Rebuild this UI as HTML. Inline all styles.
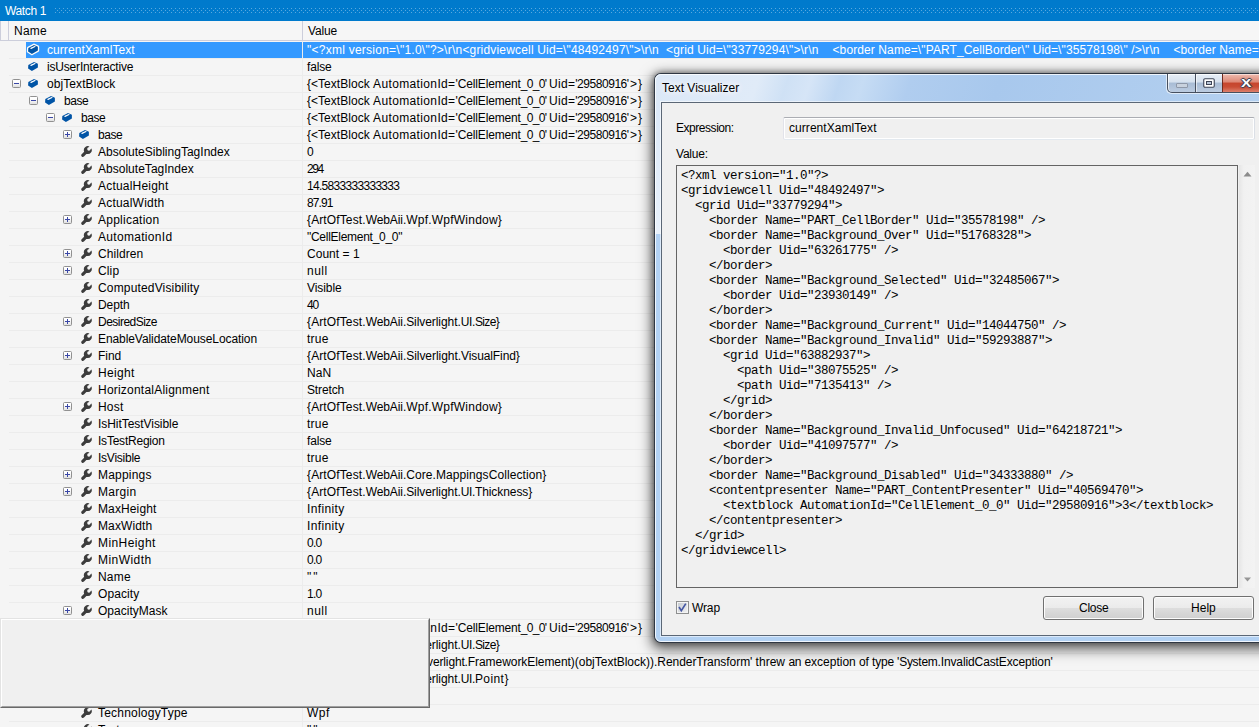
<!DOCTYPE html>
<html><head><meta charset="utf-8"><title>Watch 1</title>
<style>
html,body{margin:0;padding:0}
body{width:1259px;height:727px;overflow:hidden;position:relative;background:#f5f5f5;font-family:"Liberation Sans",sans-serif;font-size:12px;color:#000}
div,span,svg{position:absolute;white-space:pre}
.t{font-size:12px;line-height:16px;height:16px}
.k{color:#000}
.w{color:#fff}
.ic{display:block}
.ln{left:9px;right:0;height:1px;background:#ececec}
#tb{left:0;top:0;width:1259px;height:21px;background:#007acc}
#dots{left:55px;top:7px}
#hdr{left:0;top:21px;width:1259px;height:19px;background:#f6f6f6;border-bottom:1px solid #cccedb}
.mono{font-family:"Liberation Mono",monospace;font-size:12.5px;letter-spacing:-0.501px;line-height:15px;height:15px;color:#000}
</style></head><body>

<div id="tb"><svg id="dots" width="1204" height="6"><defs><pattern id="dp" width="4" height="4" patternUnits="userSpaceOnUse"><rect x="0" y="1" width="1" height="1" fill="#59a8de"/><rect x="2" y="3" width="1" height="1" fill="#59a8de"/></pattern></defs><rect width="1204" height="6" fill="url(#dp)"/></svg></div>
<div id="hdr"><div style="left:0;top:0;width:1px;height:19px;background:#cccedb"></div><div style="left:8px;top:0;width:1px;height:19px;background:#cccedb"></div><div style="left:302px;top:0;width:1px;height:19px;background:#cccedb"></div></div>
<div style="left:26px;top:42px;width:1233px;height:16px;background:#3399ff"></div>
<svg class="ic" style="left:26px;top:42px" width="15" height="14" viewBox="-2 -2 15 14"><path d="M0.3 3.9 L6 0.9 L9.9 2.7 L9.9 6.6 L3.9 9.9 L0.1 7.5 Z" fill="#0054a6" stroke-linejoin="round" stroke="#fffdf8" stroke-width="2.6" stroke-linejoin="round" paint-order="stroke"/><path d="M3 4.4 L6.9 2.5" stroke="#fff" stroke-width="1.2" stroke-linecap="round" fill="none"/></svg>
<div class="ln" style="top:58px"></div>
<svg class="ic" style="left:26px;top:59px" width="15" height="14" viewBox="-2 -2 15 14"><path d="M0.3 3.9 L6 0.9 L9.9 2.7 L9.9 6.6 L3.9 9.9 L0.1 7.5 Z" fill="#0054a6" stroke-linejoin="round"/><path d="M3 4.4 L6.9 2.5" stroke="#fff" stroke-width="1.2" stroke-linecap="round" fill="none"/></svg>
<div class="ln" style="top:75px"></div>
<svg class="ic" style="left:12px;top:79px" width="9" height="9" viewBox="0 0 9 9"><defs><linearGradient id="eg" x1="0" y1="0" x2="0" y2="1"><stop offset="0.3" stop-color="#fff"/><stop offset="1" stop-color="#dedede"/></linearGradient></defs><rect x="0.5" y="0.5" width="8" height="8" rx="1" fill="url(#eg)" stroke="#919191"/><rect x="2" y="4" width="5" height="1" fill="#3a47a6"/></svg>
<svg class="ic" style="left:26px;top:76px" width="15" height="14" viewBox="-2 -2 15 14"><path d="M0.3 3.9 L6 0.9 L9.9 2.7 L9.9 6.6 L3.9 9.9 L0.1 7.5 Z" fill="#0054a6" stroke-linejoin="round"/><path d="M3 4.4 L6.9 2.5" stroke="#fff" stroke-width="1.2" stroke-linecap="round" fill="none"/></svg>
<div class="ln" style="top:92px"></div>
<svg class="ic" style="left:29px;top:96px" width="9" height="9" viewBox="0 0 9 9"><defs><linearGradient id="eg" x1="0" y1="0" x2="0" y2="1"><stop offset="0.3" stop-color="#fff"/><stop offset="1" stop-color="#dedede"/></linearGradient></defs><rect x="0.5" y="0.5" width="8" height="8" rx="1" fill="url(#eg)" stroke="#919191"/><rect x="2" y="4" width="5" height="1" fill="#3a47a6"/></svg>
<svg class="ic" style="left:43px;top:93px" width="15" height="14" viewBox="-2 -2 15 14"><path d="M0.3 3.9 L6 0.9 L9.9 2.7 L9.9 6.6 L3.9 9.9 L0.1 7.5 Z" fill="#0054a6" stroke-linejoin="round"/><path d="M3 4.4 L6.9 2.5" stroke="#fff" stroke-width="1.2" stroke-linecap="round" fill="none"/></svg>
<div class="ln" style="top:109px"></div>
<svg class="ic" style="left:46px;top:113px" width="9" height="9" viewBox="0 0 9 9"><defs><linearGradient id="eg" x1="0" y1="0" x2="0" y2="1"><stop offset="0.3" stop-color="#fff"/><stop offset="1" stop-color="#dedede"/></linearGradient></defs><rect x="0.5" y="0.5" width="8" height="8" rx="1" fill="url(#eg)" stroke="#919191"/><rect x="2" y="4" width="5" height="1" fill="#3a47a6"/></svg>
<svg class="ic" style="left:60px;top:110px" width="15" height="14" viewBox="-2 -2 15 14"><path d="M0.3 3.9 L6 0.9 L9.9 2.7 L9.9 6.6 L3.9 9.9 L0.1 7.5 Z" fill="#0054a6" stroke-linejoin="round"/><path d="M3 4.4 L6.9 2.5" stroke="#fff" stroke-width="1.2" stroke-linecap="round" fill="none"/></svg>
<div class="ln" style="top:126px"></div>
<svg class="ic" style="left:63px;top:130px" width="9" height="9" viewBox="0 0 9 9"><defs><linearGradient id="eg" x1="0" y1="0" x2="0" y2="1"><stop offset="0.3" stop-color="#fff"/><stop offset="1" stop-color="#dedede"/></linearGradient></defs><rect x="0.5" y="0.5" width="8" height="8" rx="1" fill="url(#eg)" stroke="#919191"/><rect x="2" y="4" width="5" height="1" fill="#3a47a6"/><rect x="4" y="2" width="1" height="5" fill="#3a47a6"/></svg>
<svg class="ic" style="left:77px;top:127px" width="15" height="14" viewBox="-2 -2 15 14"><path d="M0.3 3.9 L6 0.9 L9.9 2.7 L9.9 6.6 L3.9 9.9 L0.1 7.5 Z" fill="#0054a6" stroke-linejoin="round"/><path d="M3 4.4 L6.9 2.5" stroke="#fff" stroke-width="1.2" stroke-linecap="round" fill="none"/></svg>
<div class="ln" style="top:143px"></div>
<svg class="ic" style="left:81px;top:146px" width="12" height="12" viewBox="0 0 12 12"><path d="M8.49 0.47 L7.64 1.32 A1.7 1.7 0 1 0 9.58 3.26 L10.43 2.41 A4 4 0 0 1 6.11 8.04 L5.4 8.06 L2.92 10.54 A1.6 1.6 0 0 1 0.66 8.28 L3.14 5.8 L2.86 4.79 A4 4 0 0 1 8.49 0.47 Z" fill="#3c3c3c"/></svg>
<div class="ln" style="top:160px"></div>
<svg class="ic" style="left:81px;top:163px" width="12" height="12" viewBox="0 0 12 12"><path d="M8.49 0.47 L7.64 1.32 A1.7 1.7 0 1 0 9.58 3.26 L10.43 2.41 A4 4 0 0 1 6.11 8.04 L5.4 8.06 L2.92 10.54 A1.6 1.6 0 0 1 0.66 8.28 L3.14 5.8 L2.86 4.79 A4 4 0 0 1 8.49 0.47 Z" fill="#3c3c3c"/></svg>
<div class="ln" style="top:177px"></div>
<svg class="ic" style="left:81px;top:180px" width="12" height="12" viewBox="0 0 12 12"><path d="M8.49 0.47 L7.64 1.32 A1.7 1.7 0 1 0 9.58 3.26 L10.43 2.41 A4 4 0 0 1 6.11 8.04 L5.4 8.06 L2.92 10.54 A1.6 1.6 0 0 1 0.66 8.28 L3.14 5.8 L2.86 4.79 A4 4 0 0 1 8.49 0.47 Z" fill="#3c3c3c"/></svg>
<div class="ln" style="top:194px"></div>
<svg class="ic" style="left:81px;top:197px" width="12" height="12" viewBox="0 0 12 12"><path d="M8.49 0.47 L7.64 1.32 A1.7 1.7 0 1 0 9.58 3.26 L10.43 2.41 A4 4 0 0 1 6.11 8.04 L5.4 8.06 L2.92 10.54 A1.6 1.6 0 0 1 0.66 8.28 L3.14 5.8 L2.86 4.79 A4 4 0 0 1 8.49 0.47 Z" fill="#3c3c3c"/></svg>
<div class="ln" style="top:211px"></div>
<svg class="ic" style="left:63px;top:215px" width="9" height="9" viewBox="0 0 9 9"><defs><linearGradient id="eg" x1="0" y1="0" x2="0" y2="1"><stop offset="0.3" stop-color="#fff"/><stop offset="1" stop-color="#dedede"/></linearGradient></defs><rect x="0.5" y="0.5" width="8" height="8" rx="1" fill="url(#eg)" stroke="#919191"/><rect x="2" y="4" width="5" height="1" fill="#3a47a6"/><rect x="4" y="2" width="1" height="5" fill="#3a47a6"/></svg>
<svg class="ic" style="left:81px;top:214px" width="12" height="12" viewBox="0 0 12 12"><path d="M8.49 0.47 L7.64 1.32 A1.7 1.7 0 1 0 9.58 3.26 L10.43 2.41 A4 4 0 0 1 6.11 8.04 L5.4 8.06 L2.92 10.54 A1.6 1.6 0 0 1 0.66 8.28 L3.14 5.8 L2.86 4.79 A4 4 0 0 1 8.49 0.47 Z" fill="#3c3c3c"/></svg>
<div class="ln" style="top:228px"></div>
<svg class="ic" style="left:81px;top:231px" width="12" height="12" viewBox="0 0 12 12"><path d="M8.49 0.47 L7.64 1.32 A1.7 1.7 0 1 0 9.58 3.26 L10.43 2.41 A4 4 0 0 1 6.11 8.04 L5.4 8.06 L2.92 10.54 A1.6 1.6 0 0 1 0.66 8.28 L3.14 5.8 L2.86 4.79 A4 4 0 0 1 8.49 0.47 Z" fill="#3c3c3c"/></svg>
<div class="ln" style="top:245px"></div>
<svg class="ic" style="left:63px;top:249px" width="9" height="9" viewBox="0 0 9 9"><defs><linearGradient id="eg" x1="0" y1="0" x2="0" y2="1"><stop offset="0.3" stop-color="#fff"/><stop offset="1" stop-color="#dedede"/></linearGradient></defs><rect x="0.5" y="0.5" width="8" height="8" rx="1" fill="url(#eg)" stroke="#919191"/><rect x="2" y="4" width="5" height="1" fill="#3a47a6"/><rect x="4" y="2" width="1" height="5" fill="#3a47a6"/></svg>
<svg class="ic" style="left:81px;top:248px" width="12" height="12" viewBox="0 0 12 12"><path d="M8.49 0.47 L7.64 1.32 A1.7 1.7 0 1 0 9.58 3.26 L10.43 2.41 A4 4 0 0 1 6.11 8.04 L5.4 8.06 L2.92 10.54 A1.6 1.6 0 0 1 0.66 8.28 L3.14 5.8 L2.86 4.79 A4 4 0 0 1 8.49 0.47 Z" fill="#3c3c3c"/></svg>
<div class="ln" style="top:262px"></div>
<svg class="ic" style="left:63px;top:266px" width="9" height="9" viewBox="0 0 9 9"><defs><linearGradient id="eg" x1="0" y1="0" x2="0" y2="1"><stop offset="0.3" stop-color="#fff"/><stop offset="1" stop-color="#dedede"/></linearGradient></defs><rect x="0.5" y="0.5" width="8" height="8" rx="1" fill="url(#eg)" stroke="#919191"/><rect x="2" y="4" width="5" height="1" fill="#3a47a6"/><rect x="4" y="2" width="1" height="5" fill="#3a47a6"/></svg>
<svg class="ic" style="left:81px;top:265px" width="12" height="12" viewBox="0 0 12 12"><path d="M8.49 0.47 L7.64 1.32 A1.7 1.7 0 1 0 9.58 3.26 L10.43 2.41 A4 4 0 0 1 6.11 8.04 L5.4 8.06 L2.92 10.54 A1.6 1.6 0 0 1 0.66 8.28 L3.14 5.8 L2.86 4.79 A4 4 0 0 1 8.49 0.47 Z" fill="#3c3c3c"/></svg>
<div class="ln" style="top:279px"></div>
<svg class="ic" style="left:81px;top:282px" width="12" height="12" viewBox="0 0 12 12"><path d="M8.49 0.47 L7.64 1.32 A1.7 1.7 0 1 0 9.58 3.26 L10.43 2.41 A4 4 0 0 1 6.11 8.04 L5.4 8.06 L2.92 10.54 A1.6 1.6 0 0 1 0.66 8.28 L3.14 5.8 L2.86 4.79 A4 4 0 0 1 8.49 0.47 Z" fill="#3c3c3c"/></svg>
<div class="ln" style="top:296px"></div>
<svg class="ic" style="left:81px;top:299px" width="12" height="12" viewBox="0 0 12 12"><path d="M8.49 0.47 L7.64 1.32 A1.7 1.7 0 1 0 9.58 3.26 L10.43 2.41 A4 4 0 0 1 6.11 8.04 L5.4 8.06 L2.92 10.54 A1.6 1.6 0 0 1 0.66 8.28 L3.14 5.8 L2.86 4.79 A4 4 0 0 1 8.49 0.47 Z" fill="#3c3c3c"/></svg>
<div class="ln" style="top:313px"></div>
<svg class="ic" style="left:63px;top:317px" width="9" height="9" viewBox="0 0 9 9"><defs><linearGradient id="eg" x1="0" y1="0" x2="0" y2="1"><stop offset="0.3" stop-color="#fff"/><stop offset="1" stop-color="#dedede"/></linearGradient></defs><rect x="0.5" y="0.5" width="8" height="8" rx="1" fill="url(#eg)" stroke="#919191"/><rect x="2" y="4" width="5" height="1" fill="#3a47a6"/><rect x="4" y="2" width="1" height="5" fill="#3a47a6"/></svg>
<svg class="ic" style="left:81px;top:316px" width="12" height="12" viewBox="0 0 12 12"><path d="M8.49 0.47 L7.64 1.32 A1.7 1.7 0 1 0 9.58 3.26 L10.43 2.41 A4 4 0 0 1 6.11 8.04 L5.4 8.06 L2.92 10.54 A1.6 1.6 0 0 1 0.66 8.28 L3.14 5.8 L2.86 4.79 A4 4 0 0 1 8.49 0.47 Z" fill="#3c3c3c"/></svg>
<div class="ln" style="top:330px"></div>
<svg class="ic" style="left:81px;top:333px" width="12" height="12" viewBox="0 0 12 12"><path d="M8.49 0.47 L7.64 1.32 A1.7 1.7 0 1 0 9.58 3.26 L10.43 2.41 A4 4 0 0 1 6.11 8.04 L5.4 8.06 L2.92 10.54 A1.6 1.6 0 0 1 0.66 8.28 L3.14 5.8 L2.86 4.79 A4 4 0 0 1 8.49 0.47 Z" fill="#3c3c3c"/></svg>
<div class="ln" style="top:347px"></div>
<svg class="ic" style="left:63px;top:351px" width="9" height="9" viewBox="0 0 9 9"><defs><linearGradient id="eg" x1="0" y1="0" x2="0" y2="1"><stop offset="0.3" stop-color="#fff"/><stop offset="1" stop-color="#dedede"/></linearGradient></defs><rect x="0.5" y="0.5" width="8" height="8" rx="1" fill="url(#eg)" stroke="#919191"/><rect x="2" y="4" width="5" height="1" fill="#3a47a6"/><rect x="4" y="2" width="1" height="5" fill="#3a47a6"/></svg>
<svg class="ic" style="left:81px;top:350px" width="12" height="12" viewBox="0 0 12 12"><path d="M8.49 0.47 L7.64 1.32 A1.7 1.7 0 1 0 9.58 3.26 L10.43 2.41 A4 4 0 0 1 6.11 8.04 L5.4 8.06 L2.92 10.54 A1.6 1.6 0 0 1 0.66 8.28 L3.14 5.8 L2.86 4.79 A4 4 0 0 1 8.49 0.47 Z" fill="#3c3c3c"/></svg>
<div class="ln" style="top:364px"></div>
<svg class="ic" style="left:81px;top:367px" width="12" height="12" viewBox="0 0 12 12"><path d="M8.49 0.47 L7.64 1.32 A1.7 1.7 0 1 0 9.58 3.26 L10.43 2.41 A4 4 0 0 1 6.11 8.04 L5.4 8.06 L2.92 10.54 A1.6 1.6 0 0 1 0.66 8.28 L3.14 5.8 L2.86 4.79 A4 4 0 0 1 8.49 0.47 Z" fill="#3c3c3c"/></svg>
<div class="ln" style="top:381px"></div>
<svg class="ic" style="left:81px;top:384px" width="12" height="12" viewBox="0 0 12 12"><path d="M8.49 0.47 L7.64 1.32 A1.7 1.7 0 1 0 9.58 3.26 L10.43 2.41 A4 4 0 0 1 6.11 8.04 L5.4 8.06 L2.92 10.54 A1.6 1.6 0 0 1 0.66 8.28 L3.14 5.8 L2.86 4.79 A4 4 0 0 1 8.49 0.47 Z" fill="#3c3c3c"/></svg>
<div class="ln" style="top:398px"></div>
<svg class="ic" style="left:63px;top:402px" width="9" height="9" viewBox="0 0 9 9"><defs><linearGradient id="eg" x1="0" y1="0" x2="0" y2="1"><stop offset="0.3" stop-color="#fff"/><stop offset="1" stop-color="#dedede"/></linearGradient></defs><rect x="0.5" y="0.5" width="8" height="8" rx="1" fill="url(#eg)" stroke="#919191"/><rect x="2" y="4" width="5" height="1" fill="#3a47a6"/><rect x="4" y="2" width="1" height="5" fill="#3a47a6"/></svg>
<svg class="ic" style="left:81px;top:401px" width="12" height="12" viewBox="0 0 12 12"><path d="M8.49 0.47 L7.64 1.32 A1.7 1.7 0 1 0 9.58 3.26 L10.43 2.41 A4 4 0 0 1 6.11 8.04 L5.4 8.06 L2.92 10.54 A1.6 1.6 0 0 1 0.66 8.28 L3.14 5.8 L2.86 4.79 A4 4 0 0 1 8.49 0.47 Z" fill="#3c3c3c"/></svg>
<div class="ln" style="top:415px"></div>
<svg class="ic" style="left:81px;top:418px" width="12" height="12" viewBox="0 0 12 12"><path d="M8.49 0.47 L7.64 1.32 A1.7 1.7 0 1 0 9.58 3.26 L10.43 2.41 A4 4 0 0 1 6.11 8.04 L5.4 8.06 L2.92 10.54 A1.6 1.6 0 0 1 0.66 8.28 L3.14 5.8 L2.86 4.79 A4 4 0 0 1 8.49 0.47 Z" fill="#3c3c3c"/></svg>
<div class="ln" style="top:432px"></div>
<svg class="ic" style="left:81px;top:435px" width="12" height="12" viewBox="0 0 12 12"><path d="M8.49 0.47 L7.64 1.32 A1.7 1.7 0 1 0 9.58 3.26 L10.43 2.41 A4 4 0 0 1 6.11 8.04 L5.4 8.06 L2.92 10.54 A1.6 1.6 0 0 1 0.66 8.28 L3.14 5.8 L2.86 4.79 A4 4 0 0 1 8.49 0.47 Z" fill="#3c3c3c"/></svg>
<div class="ln" style="top:449px"></div>
<svg class="ic" style="left:81px;top:452px" width="12" height="12" viewBox="0 0 12 12"><path d="M8.49 0.47 L7.64 1.32 A1.7 1.7 0 1 0 9.58 3.26 L10.43 2.41 A4 4 0 0 1 6.11 8.04 L5.4 8.06 L2.92 10.54 A1.6 1.6 0 0 1 0.66 8.28 L3.14 5.8 L2.86 4.79 A4 4 0 0 1 8.49 0.47 Z" fill="#3c3c3c"/></svg>
<div class="ln" style="top:466px"></div>
<svg class="ic" style="left:63px;top:470px" width="9" height="9" viewBox="0 0 9 9"><defs><linearGradient id="eg" x1="0" y1="0" x2="0" y2="1"><stop offset="0.3" stop-color="#fff"/><stop offset="1" stop-color="#dedede"/></linearGradient></defs><rect x="0.5" y="0.5" width="8" height="8" rx="1" fill="url(#eg)" stroke="#919191"/><rect x="2" y="4" width="5" height="1" fill="#3a47a6"/><rect x="4" y="2" width="1" height="5" fill="#3a47a6"/></svg>
<svg class="ic" style="left:81px;top:469px" width="12" height="12" viewBox="0 0 12 12"><path d="M8.49 0.47 L7.64 1.32 A1.7 1.7 0 1 0 9.58 3.26 L10.43 2.41 A4 4 0 0 1 6.11 8.04 L5.4 8.06 L2.92 10.54 A1.6 1.6 0 0 1 0.66 8.28 L3.14 5.8 L2.86 4.79 A4 4 0 0 1 8.49 0.47 Z" fill="#3c3c3c"/></svg>
<div class="ln" style="top:483px"></div>
<svg class="ic" style="left:63px;top:487px" width="9" height="9" viewBox="0 0 9 9"><defs><linearGradient id="eg" x1="0" y1="0" x2="0" y2="1"><stop offset="0.3" stop-color="#fff"/><stop offset="1" stop-color="#dedede"/></linearGradient></defs><rect x="0.5" y="0.5" width="8" height="8" rx="1" fill="url(#eg)" stroke="#919191"/><rect x="2" y="4" width="5" height="1" fill="#3a47a6"/><rect x="4" y="2" width="1" height="5" fill="#3a47a6"/></svg>
<svg class="ic" style="left:81px;top:486px" width="12" height="12" viewBox="0 0 12 12"><path d="M8.49 0.47 L7.64 1.32 A1.7 1.7 0 1 0 9.58 3.26 L10.43 2.41 A4 4 0 0 1 6.11 8.04 L5.4 8.06 L2.92 10.54 A1.6 1.6 0 0 1 0.66 8.28 L3.14 5.8 L2.86 4.79 A4 4 0 0 1 8.49 0.47 Z" fill="#3c3c3c"/></svg>
<div class="ln" style="top:500px"></div>
<svg class="ic" style="left:81px;top:503px" width="12" height="12" viewBox="0 0 12 12"><path d="M8.49 0.47 L7.64 1.32 A1.7 1.7 0 1 0 9.58 3.26 L10.43 2.41 A4 4 0 0 1 6.11 8.04 L5.4 8.06 L2.92 10.54 A1.6 1.6 0 0 1 0.66 8.28 L3.14 5.8 L2.86 4.79 A4 4 0 0 1 8.49 0.47 Z" fill="#3c3c3c"/></svg>
<div class="ln" style="top:517px"></div>
<svg class="ic" style="left:81px;top:520px" width="12" height="12" viewBox="0 0 12 12"><path d="M8.49 0.47 L7.64 1.32 A1.7 1.7 0 1 0 9.58 3.26 L10.43 2.41 A4 4 0 0 1 6.11 8.04 L5.4 8.06 L2.92 10.54 A1.6 1.6 0 0 1 0.66 8.28 L3.14 5.8 L2.86 4.79 A4 4 0 0 1 8.49 0.47 Z" fill="#3c3c3c"/></svg>
<div class="ln" style="top:534px"></div>
<svg class="ic" style="left:81px;top:537px" width="12" height="12" viewBox="0 0 12 12"><path d="M8.49 0.47 L7.64 1.32 A1.7 1.7 0 1 0 9.58 3.26 L10.43 2.41 A4 4 0 0 1 6.11 8.04 L5.4 8.06 L2.92 10.54 A1.6 1.6 0 0 1 0.66 8.28 L3.14 5.8 L2.86 4.79 A4 4 0 0 1 8.49 0.47 Z" fill="#3c3c3c"/></svg>
<div class="ln" style="top:551px"></div>
<svg class="ic" style="left:81px;top:554px" width="12" height="12" viewBox="0 0 12 12"><path d="M8.49 0.47 L7.64 1.32 A1.7 1.7 0 1 0 9.58 3.26 L10.43 2.41 A4 4 0 0 1 6.11 8.04 L5.4 8.06 L2.92 10.54 A1.6 1.6 0 0 1 0.66 8.28 L3.14 5.8 L2.86 4.79 A4 4 0 0 1 8.49 0.47 Z" fill="#3c3c3c"/></svg>
<div class="ln" style="top:568px"></div>
<svg class="ic" style="left:81px;top:571px" width="12" height="12" viewBox="0 0 12 12"><path d="M8.49 0.47 L7.64 1.32 A1.7 1.7 0 1 0 9.58 3.26 L10.43 2.41 A4 4 0 0 1 6.11 8.04 L5.4 8.06 L2.92 10.54 A1.6 1.6 0 0 1 0.66 8.28 L3.14 5.8 L2.86 4.79 A4 4 0 0 1 8.49 0.47 Z" fill="#3c3c3c"/></svg>
<div class="ln" style="top:585px"></div>
<svg class="ic" style="left:81px;top:588px" width="12" height="12" viewBox="0 0 12 12"><path d="M8.49 0.47 L7.64 1.32 A1.7 1.7 0 1 0 9.58 3.26 L10.43 2.41 A4 4 0 0 1 6.11 8.04 L5.4 8.06 L2.92 10.54 A1.6 1.6 0 0 1 0.66 8.28 L3.14 5.8 L2.86 4.79 A4 4 0 0 1 8.49 0.47 Z" fill="#3c3c3c"/></svg>
<div class="ln" style="top:602px"></div>
<svg class="ic" style="left:63px;top:606px" width="9" height="9" viewBox="0 0 9 9"><defs><linearGradient id="eg" x1="0" y1="0" x2="0" y2="1"><stop offset="0.3" stop-color="#fff"/><stop offset="1" stop-color="#dedede"/></linearGradient></defs><rect x="0.5" y="0.5" width="8" height="8" rx="1" fill="url(#eg)" stroke="#919191"/><rect x="2" y="4" width="5" height="1" fill="#3a47a6"/><rect x="4" y="2" width="1" height="5" fill="#3a47a6"/></svg>
<svg class="ic" style="left:81px;top:605px" width="12" height="12" viewBox="0 0 12 12"><path d="M8.49 0.47 L7.64 1.32 A1.7 1.7 0 1 0 9.58 3.26 L10.43 2.41 A4 4 0 0 1 6.11 8.04 L5.4 8.06 L2.92 10.54 A1.6 1.6 0 0 1 0.66 8.28 L3.14 5.8 L2.86 4.79 A4 4 0 0 1 8.49 0.47 Z" fill="#3c3c3c"/></svg>
<div class="ln" style="top:619px"></div>
<svg class="ic" style="left:63px;top:623px" width="9" height="9" viewBox="0 0 9 9"><defs><linearGradient id="eg" x1="0" y1="0" x2="0" y2="1"><stop offset="0.3" stop-color="#fff"/><stop offset="1" stop-color="#dedede"/></linearGradient></defs><rect x="0.5" y="0.5" width="8" height="8" rx="1" fill="url(#eg)" stroke="#919191"/><rect x="2" y="4" width="5" height="1" fill="#3a47a6"/><rect x="4" y="2" width="1" height="5" fill="#3a47a6"/></svg>
<svg class="ic" style="left:81px;top:622px" width="12" height="12" viewBox="0 0 12 12"><path d="M8.49 0.47 L7.64 1.32 A1.7 1.7 0 1 0 9.58 3.26 L10.43 2.41 A4 4 0 0 1 6.11 8.04 L5.4 8.06 L2.92 10.54 A1.6 1.6 0 0 1 0.66 8.28 L3.14 5.8 L2.86 4.79 A4 4 0 0 1 8.49 0.47 Z" fill="#3c3c3c"/></svg>
<div class="ln" style="top:636px"></div>
<svg class="ic" style="left:63px;top:640px" width="9" height="9" viewBox="0 0 9 9"><defs><linearGradient id="eg" x1="0" y1="0" x2="0" y2="1"><stop offset="0.3" stop-color="#fff"/><stop offset="1" stop-color="#dedede"/></linearGradient></defs><rect x="0.5" y="0.5" width="8" height="8" rx="1" fill="url(#eg)" stroke="#919191"/><rect x="2" y="4" width="5" height="1" fill="#3a47a6"/><rect x="4" y="2" width="1" height="5" fill="#3a47a6"/></svg>
<svg class="ic" style="left:81px;top:639px" width="12" height="12" viewBox="0 0 12 12"><path d="M8.49 0.47 L7.64 1.32 A1.7 1.7 0 1 0 9.58 3.26 L10.43 2.41 A4 4 0 0 1 6.11 8.04 L5.4 8.06 L2.92 10.54 A1.6 1.6 0 0 1 0.66 8.28 L3.14 5.8 L2.86 4.79 A4 4 0 0 1 8.49 0.47 Z" fill="#3c3c3c"/></svg>
<div class="ln" style="top:653px"></div>
<svg class="ic" style="left:63px;top:657px" width="9" height="9" viewBox="0 0 9 9"><defs><linearGradient id="eg" x1="0" y1="0" x2="0" y2="1"><stop offset="0.3" stop-color="#fff"/><stop offset="1" stop-color="#dedede"/></linearGradient></defs><rect x="0.5" y="0.5" width="8" height="8" rx="1" fill="url(#eg)" stroke="#919191"/><rect x="2" y="4" width="5" height="1" fill="#3a47a6"/><rect x="4" y="2" width="1" height="5" fill="#3a47a6"/></svg>
<svg class="ic" style="left:81px;top:656px" width="12" height="12" viewBox="0 0 12 12"><path d="M8.49 0.47 L7.64 1.32 A1.7 1.7 0 1 0 9.58 3.26 L10.43 2.41 A4 4 0 0 1 6.11 8.04 L5.4 8.06 L2.92 10.54 A1.6 1.6 0 0 1 0.66 8.28 L3.14 5.8 L2.86 4.79 A4 4 0 0 1 8.49 0.47 Z" fill="#3c3c3c"/></svg>
<div class="ln" style="top:670px"></div>
<svg class="ic" style="left:63px;top:674px" width="9" height="9" viewBox="0 0 9 9"><defs><linearGradient id="eg" x1="0" y1="0" x2="0" y2="1"><stop offset="0.3" stop-color="#fff"/><stop offset="1" stop-color="#dedede"/></linearGradient></defs><rect x="0.5" y="0.5" width="8" height="8" rx="1" fill="url(#eg)" stroke="#919191"/><rect x="2" y="4" width="5" height="1" fill="#3a47a6"/><rect x="4" y="2" width="1" height="5" fill="#3a47a6"/></svg>
<svg class="ic" style="left:81px;top:673px" width="12" height="12" viewBox="0 0 12 12"><path d="M8.49 0.47 L7.64 1.32 A1.7 1.7 0 1 0 9.58 3.26 L10.43 2.41 A4 4 0 0 1 6.11 8.04 L5.4 8.06 L2.92 10.54 A1.6 1.6 0 0 1 0.66 8.28 L3.14 5.8 L2.86 4.79 A4 4 0 0 1 8.49 0.47 Z" fill="#3c3c3c"/></svg>
<div class="ln" style="top:687px"></div>
<svg class="ic" style="left:81px;top:690px" width="12" height="12" viewBox="0 0 12 12"><path d="M8.49 0.47 L7.64 1.32 A1.7 1.7 0 1 0 9.58 3.26 L10.43 2.41 A4 4 0 0 1 6.11 8.04 L5.4 8.06 L2.92 10.54 A1.6 1.6 0 0 1 0.66 8.28 L3.14 5.8 L2.86 4.79 A4 4 0 0 1 8.49 0.47 Z" fill="#3c3c3c"/></svg>
<div class="ln" style="top:704px"></div>
<svg class="ic" style="left:81px;top:707px" width="12" height="12" viewBox="0 0 12 12"><path d="M8.49 0.47 L7.64 1.32 A1.7 1.7 0 1 0 9.58 3.26 L10.43 2.41 A4 4 0 0 1 6.11 8.04 L5.4 8.06 L2.92 10.54 A1.6 1.6 0 0 1 0.66 8.28 L3.14 5.8 L2.86 4.79 A4 4 0 0 1 8.49 0.47 Z" fill="#3c3c3c"/></svg>
<div class="ln" style="top:721px"></div>
<svg class="ic" style="left:81px;top:724px" width="12" height="12" viewBox="0 0 12 12"><path d="M8.49 0.47 L7.64 1.32 A1.7 1.7 0 1 0 9.58 3.26 L10.43 2.41 A4 4 0 0 1 6.11 8.04 L5.4 8.06 L2.92 10.54 A1.6 1.6 0 0 1 0.66 8.28 L3.14 5.8 L2.86 4.79 A4 4 0 0 1 8.49 0.47 Z" fill="#3c3c3c"/></svg>
<div class="ln" style="top:738px"></div>
<div style="left:302px;top:41px;width:1px;height:686px;background:#ececec"></div>
<span class="t w" style="left:5px;top:3px;letter-spacing:-0.363px;">Watch 1</span>
<span class="t" style="left:14px;top:23px;letter-spacing:0.261px;">Name</span>
<span class="t" style="left:308px;top:23px;letter-spacing:-0.178px;">Value</span>
<span class="t w" style="left:47px;top:42px;letter-spacing:0.064px;">currentXamlText</span>
<span class="t w" style="left:307px;top:42px;letter-spacing:0.245px">"&lt;?xml version=\"1.0\"?&gt;\r\n</span>
<span class="t w" style="left:462.4px;top:42px;letter-spacing:0.179px">&lt;gridviewcell Uid=\"48492497\"&gt;\r\n  </span>
<span class="t w" style="left:666.0px;top:42px;letter-spacing:0.157px">&lt;grid Uid=\"33779294\"&gt;\r\n    </span>
<span class="t w" style="left:832.5px;top:42px;letter-spacing:0.102px">&lt;border Name=\"PART_CellBorder\" Uid=\"35578198\" /&gt;\r\n    </span>
<span class="t w" style="left:1173.4px;top:42px;letter-spacing:0.102px">&lt;border Name=\"Background_Over\" Uid=\"51768328\"&gt;</span>
<span class="t" style="left:47px;top:59px;letter-spacing:-0.186px;">isUserInteractive</span>
<span class="t" style="left:307px;top:59px;letter-spacing:-0.165px;">false</span>
<span class="t" style="left:47px;top:76px;letter-spacing:0.084px;">objTextBlock</span>
<span class="t" style="left:307px;top:76px;letter-spacing:0.033px">{&lt;TextBlock </span>
<span class="t" style="left:373.1px;top:76px;letter-spacing:0.36px">AutomationId=</span>
<span class="t" style="left:455.5px;top:76px;letter-spacing:-0.14px">'CellElement</span>
<span class="t" style="left:520.8px;top:76px;letter-spacing:-0.671px">_0_0' </span>
<span class="t" style="left:549.1px;top:76px;letter-spacing:0.296px">Uid=</span>
<span class="t" style="left:575.3px;top:76px;letter-spacing:-0.465px">'29580916</span>
<span class="t" style="left:626.8px;top:76px;letter-spacing:0.894px">'&gt;}</span>
<span class="t" style="left:64px;top:93px;letter-spacing:-0.477px;">base</span>
<span class="t" style="left:307px;top:93px;letter-spacing:0.033px">{&lt;TextBlock </span>
<span class="t" style="left:373.1px;top:93px;letter-spacing:0.36px">AutomationId=</span>
<span class="t" style="left:455.5px;top:93px;letter-spacing:-0.14px">'CellElement</span>
<span class="t" style="left:520.8px;top:93px;letter-spacing:-0.671px">_0_0' </span>
<span class="t" style="left:549.1px;top:93px;letter-spacing:0.296px">Uid=</span>
<span class="t" style="left:575.3px;top:93px;letter-spacing:-0.465px">'29580916</span>
<span class="t" style="left:626.8px;top:93px;letter-spacing:0.894px">'&gt;}</span>
<span class="t" style="left:81px;top:110px;letter-spacing:-0.477px;">base</span>
<span class="t" style="left:307px;top:110px;letter-spacing:0.033px">{&lt;TextBlock </span>
<span class="t" style="left:373.1px;top:110px;letter-spacing:0.36px">AutomationId=</span>
<span class="t" style="left:455.5px;top:110px;letter-spacing:-0.14px">'CellElement</span>
<span class="t" style="left:520.8px;top:110px;letter-spacing:-0.671px">_0_0' </span>
<span class="t" style="left:549.1px;top:110px;letter-spacing:0.296px">Uid=</span>
<span class="t" style="left:575.3px;top:110px;letter-spacing:-0.465px">'29580916</span>
<span class="t" style="left:626.8px;top:110px;letter-spacing:0.894px">'&gt;}</span>
<span class="t" style="left:98px;top:127px;letter-spacing:-0.477px;">base</span>
<span class="t" style="left:307px;top:127px;letter-spacing:0.033px">{&lt;TextBlock </span>
<span class="t" style="left:373.1px;top:127px;letter-spacing:0.36px">AutomationId=</span>
<span class="t" style="left:455.5px;top:127px;letter-spacing:-0.14px">'CellElement</span>
<span class="t" style="left:520.8px;top:127px;letter-spacing:-0.671px">_0_0' </span>
<span class="t" style="left:549.1px;top:127px;letter-spacing:0.296px">Uid=</span>
<span class="t" style="left:575.3px;top:127px;letter-spacing:-0.465px">'29580916</span>
<span class="t" style="left:626.8px;top:127px;letter-spacing:0.894px">'&gt;}</span>
<span class="t" style="left:98px;top:144px;letter-spacing:0.012px;">AbsoluteSiblingTagIndex</span>
<span class="t" style="left:307px;top:144px;">0</span>
<span class="t" style="left:98px;top:161px;letter-spacing:0.02px;">AbsoluteTagIndex</span>
<span class="t" style="left:307px;top:161px;letter-spacing:-1.416px;">294</span>
<span class="t" style="left:98px;top:178px;letter-spacing:0.205px;">ActualHeight</span>
<span class="t" style="left:307px;top:178px;letter-spacing:-0.697px;">14.5833333333333</span>
<span class="t" style="left:98px;top:195px;letter-spacing:0.207px;">ActualWidth</span>
<span class="t" style="left:307px;top:195px;letter-spacing:-0.883px;">87.91</span>
<span class="t" style="left:98px;top:212px;letter-spacing:0.248px;">Application</span>
<span class="t" style="left:307px;top:212px;letter-spacing:0.122px">{ArtOfTest.</span>
<span class="t" style="left:365.7px;top:212px;letter-spacing:-0.092px">WebAii.</span>
<span class="t" style="left:406.2px;top:212px;letter-spacing:0.231px">Wpf.WpfWindow}</span>
<span class="t" style="left:98px;top:229px;letter-spacing:0.307px;">AutomationId</span>
<span class="t" style="left:307px;top:229px;letter-spacing:-0.276px;">"CellElement_0_0"</span>
<span class="t" style="left:98px;top:246px;letter-spacing:0.071px;">Children</span>
<span class="t" style="left:307px;top:246px;letter-spacing:0.028px;">Count = 1</span>
<span class="t" style="left:98px;top:263px;letter-spacing:0.143px;">Clip</span>
<span class="t" style="left:307px;top:263px;letter-spacing:0.471px;">null</span>
<span class="t" style="left:98px;top:280px;letter-spacing:0.159px;">ComputedVisibility</span>
<span class="t" style="left:307px;top:280px;letter-spacing:-0.073px;">Visible</span>
<span class="t" style="left:98px;top:297px;letter-spacing:-0.058px;">Depth</span>
<span class="t" style="left:307px;top:297px;letter-spacing:-1.159px;">40</span>
<span class="t" style="left:98px;top:314px;letter-spacing:-0.52px;">DesiredSize</span>
<span class="t" style="left:307px;top:314px;letter-spacing:0.122px">{ArtOfTest.</span>
<span class="t" style="left:365.7px;top:314px;letter-spacing:-0.092px">WebAii.</span>
<span class="t" style="left:406.2px;top:314px;letter-spacing:-0.072px">Silverlight.</span>
<span class="t" style="left:460.7px;top:314px;letter-spacing:-0.381px">UI.</span>
<span class="t" style="left:474.9px;top:314px;letter-spacing:-0.615px">Size}</span>
<span class="t" style="left:98px;top:331px;letter-spacing:-0.082px;">EnableValidateMouseLocation</span>
<span class="t" style="left:307px;top:331px;letter-spacing:0.271px;">true</span>
<span class="t" style="left:98px;top:348px;letter-spacing:-0.048px;">Find</span>
<span class="t" style="left:307px;top:348px;letter-spacing:0.122px">{ArtOfTest.</span>
<span class="t" style="left:365.7px;top:348px;letter-spacing:-0.092px">WebAii.</span>
<span class="t" style="left:406.2px;top:348px;letter-spacing:-0.047px">Silverlight.</span>
<span class="t" style="left:461.0px;top:348px;letter-spacing:-0.103px">VisualFind}</span>
<span class="t" style="left:98px;top:365px;letter-spacing:0.343px;">Height</span>
<span class="t" style="left:307px;top:365px;letter-spacing:0.142px;">NaN</span>
<span class="t" style="left:98px;top:382px;letter-spacing:0.217px;">HorizontalAlignment</span>
<span class="t" style="left:307px;top:382px;letter-spacing:-0.136px;">Stretch</span>
<span class="t" style="left:98px;top:399px;letter-spacing:0.204px;">Host</span>
<span class="t" style="left:307px;top:399px;letter-spacing:0.122px">{ArtOfTest.</span>
<span class="t" style="left:365.7px;top:399px;letter-spacing:-0.092px">WebAii.</span>
<span class="t" style="left:406.2px;top:399px;letter-spacing:0.231px">Wpf.WpfWindow}</span>
<span class="t" style="left:98px;top:416px;letter-spacing:-0.049px;">IsHitTestVisible</span>
<span class="t" style="left:307px;top:416px;letter-spacing:0.271px;">true</span>
<span class="t" style="left:98px;top:433px;letter-spacing:-0.225px;">IsTestRegion</span>
<span class="t" style="left:307px;top:433px;letter-spacing:-0.165px;">false</span>
<span class="t" style="left:98px;top:450px;letter-spacing:-0.246px;">IsVisible</span>
<span class="t" style="left:307px;top:450px;letter-spacing:0.271px;">true</span>
<span class="t" style="left:98px;top:467px;letter-spacing:0.196px;">Mappings</span>
<span class="t" style="left:307px;top:467px;letter-spacing:0.122px">{ArtOfTest.</span>
<span class="t" style="left:365.7px;top:467px;letter-spacing:-0.092px">WebAii.</span>
<span class="t" style="left:406.2px;top:467px;letter-spacing:0.084px">Core.MappingsCollection}</span>
<span class="t" style="left:98px;top:484px;letter-spacing:0.282px;">Margin</span>
<span class="t" style="left:307px;top:484px;letter-spacing:0.122px">{ArtOfTest.</span>
<span class="t" style="left:365.7px;top:484px;letter-spacing:-0.092px">WebAii.</span>
<span class="t" style="left:406.2px;top:484px;letter-spacing:-0.072px">Silverlight.</span>
<span class="t" style="left:460.7px;top:484px;letter-spacing:-0.381px">UI.</span>
<span class="t" style="left:474.9px;top:484px;letter-spacing:-0.07px">Thickness}</span>
<span class="t" style="left:98px;top:501px;letter-spacing:0.118px;">MaxHeight</span>
<span class="t" style="left:307px;top:501px;letter-spacing:0.359px;">Infinity</span>
<span class="t" style="left:98px;top:518px;letter-spacing:0.108px;">MaxWidth</span>
<span class="t" style="left:307px;top:518px;letter-spacing:0.359px;">Infinity</span>
<span class="t" style="left:98px;top:535px;letter-spacing:0.421px;">MinHeight</span>
<span class="t" style="left:307px;top:535px;letter-spacing:-0.794px;">0.0</span>
<span class="t" style="left:98px;top:552px;letter-spacing:0.455px;">MinWidth</span>
<span class="t" style="left:307px;top:552px;letter-spacing:-0.794px;">0.0</span>
<span class="t" style="left:98px;top:569px;letter-spacing:0.195px;">Name</span>
<span class="t" style="left:307px;top:569px;letter-spacing:1.869px;">""</span>
<span class="t" style="left:98px;top:586px;letter-spacing:0.085px;">Opacity</span>
<span class="t" style="left:307px;top:586px;letter-spacing:-0.794px;">1.0</span>
<span class="t" style="left:98px;top:603px;letter-spacing:0.024px;">OpacityMask</span>
<span class="t" style="left:307px;top:603px;letter-spacing:0.471px;">null</span>
<span class="t" style="left:98px;top:620px;">Parent</span>
<span class="t" style="left:307px;top:620px;letter-spacing:0.033px">{&lt;TextBlock </span>
<span class="t" style="left:373.1px;top:620px;letter-spacing:0.36px">AutomationId=</span>
<span class="t" style="left:455.5px;top:620px;letter-spacing:-0.14px">'CellElement</span>
<span class="t" style="left:520.8px;top:620px;letter-spacing:-0.671px">_0_0' </span>
<span class="t" style="left:549.1px;top:620px;letter-spacing:0.296px">Uid=</span>
<span class="t" style="left:575.3px;top:620px;letter-spacing:-0.465px">'29580916</span>
<span class="t" style="left:626.8px;top:620px;letter-spacing:0.894px">'&gt;}</span>
<span class="t" style="left:98px;top:637px;">RenderSize</span>
<span class="t" style="left:307px;top:637px;letter-spacing:0.122px">{ArtOfTest.</span>
<span class="t" style="left:365.7px;top:637px;letter-spacing:-0.092px">WebAii.</span>
<span class="t" style="left:406.2px;top:637px;letter-spacing:-0.072px">Silverlight.</span>
<span class="t" style="left:460.7px;top:637px;letter-spacing:-0.381px">UI.</span>
<span class="t" style="left:474.9px;top:637px;letter-spacing:-0.615px">Size}</span>
<span class="t" style="left:98px;top:654px;">RenderTransform</span>
<span class="t" style="left:307px;top:654px;letter-spacing:0.079px">'((ArtOfTest.WebAii.Silv</span>
<span class="t" style="left:433.0px;top:654px;letter-spacing:-0.154px">erlight.</span>
<span class="t" style="left:467.8px;top:654px;letter-spacing:-0.061px">FrameworkElement)</span>
<span class="t" style="left:574.8px;top:654px;letter-spacing:-0.011px">(objTextBlock))</span>
<span class="t" style="left:654.0px;top:654px;letter-spacing:-0.053px">.RenderTransform' </span>
<span class="t" style="left:755.6px;top:654px;letter-spacing:0.019px">threw </span>
<span class="t" style="left:788.4px;top:654px;letter-spacing:-0.229px">an </span>
<span class="t" style="left:804.4px;top:654px;letter-spacing:-0.0px">exception </span>
<span class="t" style="left:859.1px;top:654px;letter-spacing:-0.148px">of </span>
<span class="t" style="left:872.0px;top:654px;letter-spacing:-0.183px">type </span>
<span class="t" style="left:897.1px;top:654px;letter-spacing:-0.255px">'System.</span>
<span class="t" style="left:940.7px;top:654px;letter-spacing:-0.113px">InvalidCastException'</span>
<span class="t" style="left:98px;top:671px;">RenderTransformOrigin</span>
<span class="t" style="left:307px;top:671px;letter-spacing:0.122px">{ArtOfTest.</span>
<span class="t" style="left:365.7px;top:671px;letter-spacing:-0.092px">WebAii.</span>
<span class="t" style="left:406.2px;top:671px;letter-spacing:-0.072px">Silverlight.</span>
<span class="t" style="left:460.7px;top:671px;letter-spacing:-0.381px">UI.</span>
<span class="t" style="left:474.9px;top:671px;letter-spacing:0.428px">Point}</span>
<span class="t" style="left:98px;top:688px;">Tag</span>
<span class="t" style="left:307px;top:688px;letter-spacing:0.471px;">null</span>
<span class="t" style="left:98px;top:705px;letter-spacing:0.213px;">TechnologyType</span>
<span class="t" style="left:307px;top:705px;letter-spacing:0.478px;">Wpf</span>
<span class="t" style="left:98px;top:722px;letter-spacing:-0.139px;">Text</span>
<span class="t" style="left:307px;top:722px;letter-spacing:1.869px;">""</span>
<div style="left:0;top:618px;width:430px;height:90px;background:#f0f0f0;box-sizing:border-box;border:1px solid;border-color:#e3e3e3 #696969 #696969 #e3e3e3"><div style="left:0;top:0;right:0;bottom:0;border:1px solid;border-color:#fff #a0a0a0 #a0a0a0 #fff"></div></div>
<div id="dlg" style="left:655px;top:74px;width:640px;height:568px;border-radius:6px;background:#b2d1f3;box-shadow:0 0 0 1px #2f3743,0 4px 13px 4px rgba(0,0,0,.55),0 0 6px 1px rgba(0,0,0,.45)">
<div style="left:0;top:0;width:640px;height:30px;border-radius:6px 6px 0 0;background:linear-gradient(108deg,#dbe8f7 0,#e0ebf8 100px,#cfe1f5 128px,#d6e5f7 150px,#bfd7f2 178px,#c6dcf4 200px,#b0cdef 245px,#a8c8ed 330px,#b7d2f0 640px)"></div>
<div style="left:0;top:30px;width:8px;height:130px;background:linear-gradient(#dbe8f8,#e8f1fb)"></div>
<div style="left:0;top:0;right:0;bottom:0;border-radius:6px;border:1px solid rgba(255,255,255,.8)"></div>
<div style="left:7px;top:29px;width:640px;height:532px;background:#f0f0f0;box-shadow:0 0 0 1px #5b6776,0 0 0 2px rgba(255,255,255,.55)"></div>
</div>
<div style="left:1167px;top:74px;width:100px;height:18px;border:1px solid #47505f;border-top:none;border-radius:0 0 0 5px;background:linear-gradient(#e6edf6 0,#d6e1ee 45%,#a8bcd5 50%,#bccce1 100%);box-shadow:-1px 1px 0 0 rgba(255,255,255,.6),inset 1px 0 0 0 rgba(255,255,255,.7),inset 0 1px 0 0 rgba(255,255,255,.8)"></div>
<div style="left:1195px;top:74px;width:1px;height:18px;background:#47505f;box-shadow:1px 0 0 0 rgba(255,255,255,.6)"></div>
<div style="left:1223px;top:74px;width:44px;height:18px;background:linear-gradient(#efbcb0 0,#dd8775 45%,#c6452d 50%,#c94d35 72%,#dd806c 100%);box-shadow:inset 0 1px 0 0 rgba(255,255,255,.5)"></div>
<div style="left:1222px;top:74px;width:1px;height:18px;background:#6f2a1f"></div>
<div style="left:1176px;top:83px;width:10px;height:3px;background:#c9d2de;border:1px solid #8e98a8;border-radius:1px"></div>
<svg style="left:1203px;top:78px" width="12" height="10" viewBox="0 0 12 10"><rect x="0.75" y="0.75" width="10.5" height="8.5" rx="1.2" fill="#fff" stroke="#3d4456" stroke-width="1.1"/><rect x="3.5" y="3.5" width="5" height="3" fill="#b9c6d8" stroke="#3d4456" stroke-width="1"/></svg>
<span style="left:1240.5px;top:74px;font-size:11.5px;font-weight:bold;line-height:18px;color:#fff;transform:scaleX(1.35);transform-origin:0 0;text-shadow:0 0 1px #3a3a4a,0 0 2px #3a3a4a,1px 0 0 #4a4a5a,-1px 0 0 #4a4a5a,0 1px 0 #4a4a5a,0 -1px 0 #4a4a5a">X</span>
<div style="left:783px;top:117px;width:470px;height:21px;border:1px solid;border-color:#abadb3 #dbdfe6 #e3e9ef #e2e3ea;background:#f0f0f0;border-radius:2px;box-shadow:inset 0 0 0 1px #fff"></div>
<div style="left:676px;top:165px;width:560px;height:421px;border:1px solid #646464;background:#f0f0f0"></div>
<span class="mono" style="left:681px;top:169px">&lt;?xml version="1.0"?&gt;</span>
<span class="mono" style="left:681px;top:184px">&lt;gridviewcell Uid="48492497"&gt;</span>
<span class="mono" style="left:681px;top:199px">  &lt;grid Uid="33779294"&gt;</span>
<span class="mono" style="left:681px;top:214px">    &lt;border Name="PART_CellBorder" Uid="35578198" /&gt;</span>
<span class="mono" style="left:681px;top:229px">    &lt;border Name="Background_Over" Uid="51768328"&gt;</span>
<span class="mono" style="left:681px;top:244px">      &lt;border Uid="63261775" /&gt;</span>
<span class="mono" style="left:681px;top:259px">    &lt;/border&gt;</span>
<span class="mono" style="left:681px;top:274px">    &lt;border Name="Background_Selected" Uid="32485067"&gt;</span>
<span class="mono" style="left:681px;top:289px">      &lt;border Uid="23930149" /&gt;</span>
<span class="mono" style="left:681px;top:304px">    &lt;/border&gt;</span>
<span class="mono" style="left:681px;top:319px">    &lt;border Name="Background_Current" Uid="14044750" /&gt;</span>
<span class="mono" style="left:681px;top:334px">    &lt;border Name="Background_Invalid" Uid="59293887"&gt;</span>
<span class="mono" style="left:681px;top:349px">      &lt;grid Uid="63882937"&gt;</span>
<span class="mono" style="left:681px;top:364px">        &lt;path Uid="38075525" /&gt;</span>
<span class="mono" style="left:681px;top:379px">        &lt;path Uid="7135413" /&gt;</span>
<span class="mono" style="left:681px;top:394px">      &lt;/grid&gt;</span>
<span class="mono" style="left:681px;top:409px">    &lt;/border&gt;</span>
<span class="mono" style="left:681px;top:424px">    &lt;border Name="Background_Invalid_Unfocused" Uid="64218721"&gt;</span>
<span class="mono" style="left:681px;top:439px">      &lt;border Uid="41097577" /&gt;</span>
<span class="mono" style="left:681px;top:454px">    &lt;/border&gt;</span>
<span class="mono" style="left:681px;top:469px">    &lt;border Name="Background_Disabled" Uid="34333880" /&gt;</span>
<span class="mono" style="left:681px;top:484px">    &lt;contentpresenter Name="PART_ContentPresenter" Uid="40569470"&gt;</span>
<span class="mono" style="left:681px;top:499px">      &lt;textblock AutomationId="CellElement_0_0" Uid="29580916"&gt;3&lt;/textblock&gt;</span>
<span class="mono" style="left:681px;top:514px">    &lt;/contentpresenter&gt;</span>
<span class="mono" style="left:681px;top:529px">  &lt;/grid&gt;</span>
<span class="mono" style="left:681px;top:544px">&lt;/gridviewcell&gt;</span>
<div style="left:1239px;top:165px;width:16px;height:423px;background:linear-gradient(90deg,#e6e6e6,#f1f1f1 30%,#f3f3f3)"></div>
<svg style="left:1243px;top:171px" width="9" height="6" viewBox="0 0 9 6"><path d="M0.5 5.5 L4.5 0.8 L8.5 5.5 Z" fill="#8c8c8c"/></svg>
<svg style="left:1243px;top:577px" width="9" height="6" viewBox="0 0 9 6"><path d="M1 0.5 L4.5 4.6 L8 0.5 Z" fill="#969696"/></svg>
<div style="left:676px;top:601px;width:11px;height:11px;border:1px solid #8e8f8f;background:linear-gradient(135deg,#c4c9d0,#f4f4f4);box-shadow:inset 0 0 0 1px #f4f4f4"></div>
<svg style="left:677px;top:602px" width="11" height="11" viewBox="0 0 11 11"><path d="M2 5 L4.3 8.6 L8.8 1.6" stroke="#4557a3" stroke-width="1.7" fill="none"/></svg>
<div style="left:1043px;top:596px;width:99px;height:22px;border:1px solid #707070;border-radius:3px;background:linear-gradient(#f2f2f2 0,#ebebeb 48%,#dddddd 52%,#cfcfcf 100%);box-shadow:inset 0 0 0 1px #fcfcfc"></div>
<div style="left:1153px;top:596px;width:99px;height:22px;border:1px solid #707070;border-radius:3px;background:linear-gradient(#f2f2f2 0,#ebebeb 48%,#dddddd 52%,#cfcfcf 100%);box-shadow:inset 0 0 0 1px #fcfcfc"></div>
<span class="t k" style="left:662px;top:80px;letter-spacing:0.003px;text-shadow:0 0 6px #fff,0 0 9px #fff,0 0 12px rgba(255,255,255,.9)">Text Visualizer</span>
<span class="t k" style="left:676px;top:120px;letter-spacing:-0.46px;">Expression:</span>
<span class="t k" style="left:789px;top:120px;letter-spacing:0.057px;">currentXamlText</span>
<span class="t k" style="left:676px;top:146px;letter-spacing:-0.228px;">Value:</span>
<span class="t k" style="left:692px;top:600px;letter-spacing:-0.118px;">Wrap</span>
<span class="t k" style="left:1079px;top:600px;letter-spacing:-0.272px;">Close</span>
<span class="t k" style="left:1191px;top:600px;letter-spacing:0.037px;">Help</span>
</body></html>
